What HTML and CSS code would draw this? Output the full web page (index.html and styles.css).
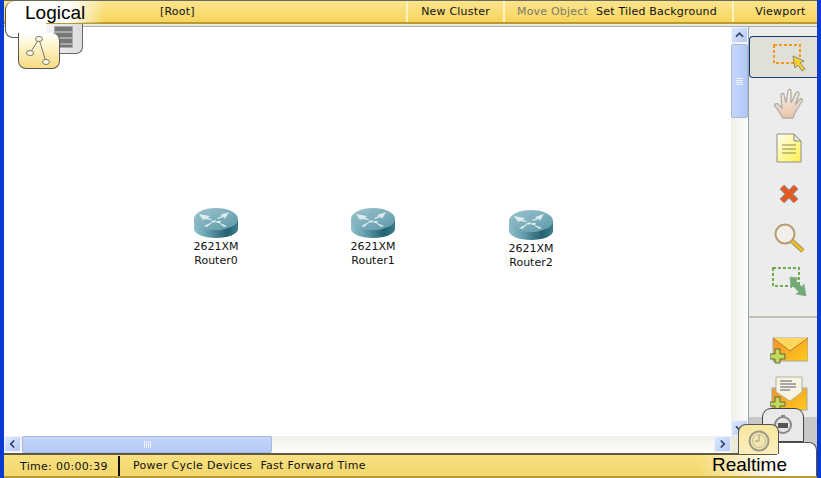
FILE: index.html
```html
<!DOCTYPE html>
<html lang="en">
<head>
<meta charset="utf-8">
<title>Logical workspace</title>
<link rel="stylesheet" href="styles.css">
</head>
<body>
<div class="app">
  <header class="topbar">
    <div class="menu-cell cell-root">[Root]</div>
    <div class="menu-cell cell-cluster">New Cluster</div>
    <div class="menu-cell cell-actions"><span class="disabled">Move Object</span><span>Set Tiled Background</span></div>
    <div class="menu-cell cell-viewport">Viewport</div>
  </header>
  <div class="beige-line"></div>
  <main class="middle">
    <div class="work">
      <div class="work-top">
        <div class="canvas">
          <div class="node node-0"><svg class="router" viewBox="0 0 46 32"><use href="#router-shape"/></svg><span>2621XM</span><span>Router0</span></div>
          <div class="node node-1"><svg class="router" viewBox="0 0 46 32"><use href="#router-shape"/></svg><span>2621XM</span><span>Router1</span></div>
          <div class="node node-2"><svg class="router" viewBox="0 0 46 32"><use href="#router-shape"/></svg><span>2621XM</span><span>Router2</span></div>
        </div>
        <div class="vscroll">
          <div class="sbtn"><svg viewBox="0 0 16 16"><path d="M4 10l4-4 4 4" fill="none" stroke="#2a3f6e" stroke-width="2"/></svg></div>
          <div class="vthumb"><i></i><i></i><i></i><i></i></div>
          <div class="strack"></div>
          <div class="sbtn"><svg viewBox="0 0 16 16"><path d="M4 6l4 4 4-4" fill="none" stroke="#2a3f6e" stroke-width="2"/></svg></div>
        </div>
      </div>
      <div class="hscroll">
        <div class="sbtn"><svg viewBox="0 0 16 16"><path d="M10 4l-4 4 4 4" fill="none" stroke="#2a3f6e" stroke-width="2"/></svg></div>
        <div class="hthumb"><i></i><i></i><i></i><i></i></div>
        <div class="strack"></div>
        <div class="sbtn"><svg viewBox="0 0 16 16"><path d="M6 4l4 4-4 4" fill="none" stroke="#2a3f6e" stroke-width="2"/></svg></div>
        <div class="corner"></div>
      </div>
    </div>
    <aside class="sidebar">
      <div class="tool tool-selected"><svg width="36" height="30" viewBox="0 0 36 30"><rect x="2" y="3" width="26" height="18" fill="none" stroke="#f39a1c" stroke-width="2" stroke-dasharray="3 2"/><path d="M21 14l11 5-4 2 5 6-3 2-4-6-3 3z" fill="#f6d32c" stroke="#8c8a70"/></svg></div>
      <div class="tool tool-hand"><svg width="32" height="32" viewBox="0 0 32 32"><defs><linearGradient id="handg" x1="0" y1="0" x2="0" y2="1"><stop offset="0" stop-color="#faf3ee"/><stop offset="1" stop-color="#e8c4a8"/></linearGradient></defs><path d="M9 30C6 26 4 21 1 18c-1-2 1-3 3-2l4 4L7 7c0-2 3-2 3 0l2 8 2-12c0-2 3-2 3 0l0 12 5-10c1-2 3-1 3 1l-4 11 5-6c1-1 3 0 2 2l-6 10c-2 3-2 5-3 7z" fill="url(#handg)" stroke="#b0b0a8" stroke-width="1.4"/></svg></div>
      <div class="tool tool-note"><svg width="26" height="30" viewBox="0 0 26 30"><defs><linearGradient id="noteg" x1="0" y1="0" x2="1" y2="1"><stop offset="0" stop-color="#fffff0"/><stop offset="1" stop-color="#fff04c"/></linearGradient></defs><path d="M1 1h17l7 7v21H1z" fill="url(#noteg)" stroke="#8c8c8c"/><path d="M18 1v7h7z" fill="#e8e8d8" stroke="#8c8c8c"/><path d="M6 12h14M6 16h14M6 20h14" stroke="#8c8a50"/></svg></div>
      <div class="tool tool-x"><svg width="22" height="22" viewBox="0 0 22 22"><path d="M4 4l14 14M18 4L4 18" stroke="#8b8b8b" stroke-width="6.5"/><path d="M4 4l14 14M18 4L4 18" stroke="#e8581c" stroke-width="4.5"/></svg></div>
      <div class="tool tool-zoom"><svg width="32" height="32" viewBox="0 0 32 32"><circle cx="12" cy="12" r="9.5" fill="#f1efe9" stroke="#b89a6c" stroke-width="2"/><path d="M19 19l11 10" stroke="#8f8a70" stroke-width="4.5"/><path d="M19 19l11 10" stroke="#f6c21c" stroke-width="3"/></svg></div>
      <div class="tool tool-resize"><svg width="36" height="34" viewBox="0 0 36 34"><rect x="2" y="2" width="26" height="18" fill="none" stroke="#6dae54" stroke-width="2" stroke-dasharray="3 2"/><path d="M19 11l8 1-2 3 6 6 2-3 2 12-10-2 3-2-6-6-2 2z" fill="#70ac74" stroke="#8a9a8a" stroke-width=".6"/></svg></div>
      <div class="tool-divider"></div>
      <div class="tool tool-mail"><svg width="38" height="28" viewBox="0 0 38 28"><defs><linearGradient id="mailg" x1="0" y1="0" x2="1" y2="1"><stop offset="0" stop-color="#f4902c"/><stop offset="1" stop-color="#ffcc1c"/></linearGradient></defs><rect x="3" y="1" width="35" height="23" fill="url(#mailg)" stroke="#a8a8a0"/><path d="M3 1l17 13L38 1" fill="#ffd75c" stroke="#b07a2c"/><path d="M5 12h5v5h5v5h-5v4H5v-4H0v-5h5z" fill="#c4d85c" stroke="#5a6a40"/></svg></div>
      <div class="tool tool-mail2"><svg width="38" height="35" viewBox="0 0 38 35"><rect x="2" y="12" width="35" height="22" fill="url(#mailg)" stroke="#a8a8a0"/><path d="M6 16V1h26v15l-12 9z" fill="#f8f4e0" stroke="#b0b0a0"/><path d="M10 5h12M10 8h16M10 11h16M10 14h10" stroke="#a8a8a8" stroke-width="2"/><path d="M5 21h5v5h5v4h-5v3H5v-3H0v-4h5z" fill="#c4d85c" stroke="#5a6a40"/></svg></div>
    </aside>
  </main>
  <footer class="bottombar">
    <div class="time">Time: 00:00:39</div>
    <div class="actions"><span>Power Cycle Devices</span><span>Fast Forward Time</span></div>
  </footer>

  <div class="sub-tile">
    <div class="sub-icon"></div>
  </div>
  <div class="logical-tab">Logical</div>
  <div class="logical-tile"><svg width="42" height="35" viewBox="0 0 42 35"><path d="M20 6L11 20M20 6l7 23" stroke="#77776c" fill="none"/><ellipse cx="20" cy="6" rx="3.500" ry="2.500" fill="#fffbe6" stroke="#77776c"/><ellipse cx="11" cy="20" rx="3.500" ry="2.500" fill="#fffbe6" stroke="#77776c"/><ellipse cx="27" cy="29" rx="3.500" ry="2.500" fill="#fffbe6" stroke="#77776c"/></svg></div>

  <div class="clock-tile"><svg width="22" height="22" viewBox="0 0 22 22"><circle cx="11" cy="11" r="8" fill="#e4e4e4" stroke="#8a8a8a" stroke-width="2"/><rect x="6" y="9" width="10" height="5" fill="#555"/><rect x="9" y="1" width="4" height="2" fill="#888"/></svg></div>
  <div class="realtime-tab">
    <div class="realtime-body"></div>
    <div class="realtime-icon"><svg width="22" height="22" viewBox="0 0 22 22"><circle cx="11" cy="11" r="9.500" fill="#f3e7ae" stroke="#9d9a84" stroke-width="2"/><circle cx="11" cy="11" r="6.500" fill="none" stroke="#c2bd9c"/><path d="M11 5v6H7" fill="none" stroke="#9d9a84"/></svg></div>
    <div class="realtime-label">Realtime</div>
  </div>
</div>

<svg class="defs" width="0" height="0">
  <defs>
    <linearGradient id="rside" x1="0" x2="1" y1="0" y2="0">
      <stop offset="0" stop-color="#8fc0cc"/><stop offset=".35" stop-color="#5f9aaa"/><stop offset=".75" stop-color="#24606f"/><stop offset="1" stop-color="#3e7f8f"/>
    </linearGradient>
    <linearGradient id="rtop" x1="0" x2="1" y1="0" y2="1">
      <stop offset="0" stop-color="#9cc4ce"/><stop offset="1" stop-color="#5d98a8"/>
    </linearGradient>
    <g id="router-shape">
      <path d="M1 12v10c0 5 10 9 22 9s22-4 22-9V12z" fill="url(#rside)"/>
      <ellipse cx="23" cy="12" rx="22" ry="11" fill="url(#rtop)"/>
      <path d="M6 7l11 2-2 2 4 1-1 1-6-1-2 1zM36 5l-9 3 2 1-5 2 1 1 6-2 1 2zM11 19l8-4-1-1 5-1-1 3-2-1-6 5zM34 19l-7-3 1-2-5 0 1 2 2 0 5 4z" fill="#dbeaee"/>
    </g>
  </defs>
</svg>
</body>
</html>
```

FILE: styles.css
```css
* { box-sizing: border-box; }
html, body { margin: 0; padding: 0; width: 821px; height: 478px; overflow: hidden; }
body { font-family: "DejaVu Sans", Verdana, sans-serif; font-size: 11px; color: #111; background: #0a3bd0; }
.defs { position: absolute; }
.app { position: relative; width: 821px; height: 478px; padding: 0 4px; background: linear-gradient(to right, #0a3bd0 0, #0a3bd0 4px, #fff 4px, #fff 817px, #0a3bd0 817px); display: flex; flex-direction: column; overflow: hidden; }

.topbar { height: 24px; flex: none; display: flex; background: linear-gradient(to bottom, #fbe48f, #f8d867 80%, #f5d45c); border-top: 1px solid #6b6a55; border-bottom: 2px solid #b79a32; line-height: 21px; padding-left: 76px; letter-spacing: .2px; }
.menu-cell { height: 100%; text-align: center; white-space: nowrap; }
.cell-root { width: 328px; border-right: 2px solid #fbf2c4; text-align: left; padding-left: 80px; }
.cell-cluster { width: 97px; border-right: 2px solid #fbf2c4; }
.cell-actions { width: 229px; display: flex; gap: 8px; padding-left: 12px; border-right: 2px solid #fbf2c4; }
.cell-viewport { flex: 1; padding-left: 10px; }
.disabled { color: #7d7a6a; }

.beige-line { height: 3px; flex: none; background: #eeeadc; border-bottom: 1px solid #9cb0b6; }

.middle { flex: 1; min-height: 0; display: flex; }
.work { width: 744px; flex: none; display: flex; flex-direction: column; }
.work-top { flex: 1; min-height: 0; display: flex; }
.canvas { position: relative; width: 727px; flex: none; background: #fff; }

.node { position: absolute; width: 60px; display: flex; flex-direction: column; align-items: center; line-height: 14px; font-size: 11px; }
.node-0 { left: 182px; top: 180px; }
.node-1 { left: 339px; top: 180px; }
.node-2 { left: 497px; top: 182px; }
.router { width: 46px; height: 32px; display: block; margin-bottom: 1px; }

.vscroll { width: 17px; flex: none; display: flex; flex-direction: column; background: linear-gradient(to right, #f2f0e8, #fdfdfb); }
.sbtn { width: 17px; height: 16px; flex: none; background: linear-gradient(135deg, #dfe8fd, #b5c8f6); border: 1px solid #eef2fc; border-radius: 2px; }
.sbtn svg { display: block; width: 15px; height: 14px; }
.vthumb { height: 74px; margin-top: 1px; flex: none; background: linear-gradient(to right, #c6d6fb, #b3c8f8); border: 1px solid #e6ecfb; border-radius: 2px; outline: 1px solid #a6b7d8; outline-offset: -1px; display: flex; flex-direction: column; justify-content: center; align-items: center; gap: 1px; }
.vthumb i { display: block; width: 7px; height: 1px; background: #eef3ff; }
.strack { flex: 1; min-width: 0; min-height: 0; }

.hscroll { height: 17px; flex: none; display: flex; background: linear-gradient(to bottom, #f2f0e8, #fdfdfb); }
.hthumb { width: 250px; margin-left: 1px; flex: none; background: linear-gradient(to bottom, #c6d6fb, #b3c8f8); border: 1px solid #e6ecfb; border-radius: 2px; outline: 1px solid #a6b7d8; outline-offset: -1px; display: flex; justify-content: center; align-items: center; gap: 1px; }
.hthumb i { display: block; width: 1px; height: 7px; background: #eef3ff; }
.corner { width: 17px; flex: none; background: #ece9d8; }

.sidebar { flex: 1; background: linear-gradient(to bottom, #ececec 0, #ececec 390px, #c8c8c8 390px); border-left: 1px solid #93a6a8; display: flex; flex-direction: column; align-items: center; position: relative; }
.tool { width: 100%; flex: none; display: flex; justify-content: center; align-items: center; padding-left: 12px; }
.tool-selected { height: 42px; margin-top: 9px; background: #e1e0d8; border: 1px solid #123f74; border-right: none; border-radius: 4px 0 0 4px; }
.tool-hand { height: 46px; margin-top: 3px; padding-left: 14px; }
.tool-note { height: 42px; }
.tool-x { height: 50px; }
.tool-zoom { height: 38px; }
.tool-resize { height: 52px; }
.tool-divider { width: 100%; height: 2px; margin-top: 7px; background: #c3c0b4; flex: none; }
.tool-mail { height: 28px; margin-top: 19px; }
.tool-mail2 { height: 35px; margin-top: 11px; }

.bottombar { height: 25px; flex: none; display: flex; align-items: center; margin: 0 0 0 0; background: linear-gradient(to bottom, rgba(255,255,255,.12), rgba(0,0,0,.02)), linear-gradient(to right, #f8dc70 0, #f8dc70 696px, #fff 770px); border-top: 2px solid #5f5b42; border-bottom: 2px solid #b79a32; letter-spacing: .3px; }
.time { width: 116px; padding-left: 16px; height: 20px; line-height: 21px; border-right: 2px solid #111; white-space: nowrap; }
.actions { padding-left: 13px; display: flex; gap: 8px; white-space: nowrap; line-height: 21px; }

.logical-tab { position: absolute; left: 5px; top: 1px; width: 100px; height: 22px; padding-left: 19px; background: linear-gradient(to right, #fff 0, #fff 62%, rgba(255,255,255,0) 100%); border-left: 1px solid #555; border-top-left-radius: 9px; font-family: "Liberation Sans", Arial, sans-serif; font-size: 19px; line-height: 24px; color: #000; white-space: nowrap; }
.logical-tab::after { content: ""; position: absolute; left: -1px; top: 21px; width: 40px; height: 15px; background: #fff; border-left: 1px solid #555; border-bottom: 1px solid #555; border-bottom-left-radius: 8px; }
.sub-tile { position: absolute; left: 45px; top: 24px; width: 38px; height: 30px; background: linear-gradient(to right, #f6f6f6, #dcdcdc); border: 1px solid #666; border-top: none; border-left: none; border-bottom-right-radius: 7px; display: flex; padding-left: 9px; }
.sub-icon { width: 19px; height: 22px; margin-top: 2px; background: repeating-linear-gradient(to bottom, #777 0, #777 4px, #aaa 4px, #aaa 6px); border: 1px solid #aaa; }
.logical-tile { position: absolute; left: 18px; top: 33px; width: 42px; height: 36px; background: linear-gradient(to bottom, #fff 0, #fff8dc 25%, #f8dc80 100%); border: 1px solid #555; border-top: none; border-radius: 0 8px 8px 8px; }

.clock-tile { position: absolute; left: 762px; top: 408px; width: 42px; height: 34px; background: #e9e9e9; border: 1px solid #444; border-radius: 9px 9px 0 0; display: flex; justify-content: center; padding-top: 5px; }
.realtime-tab { position: absolute; left: 738px; top: 424px; width: 79px; height: 52px; }
.realtime-body { position: absolute; left: 39px; top: 18px; width: 40px; height: 34px; background: #fff; border: 1px solid #555; border-left: none; border-bottom: none; border-radius: 0 8px 0 0; }
.realtime-icon { position: absolute; left: 0; top: 0; width: 41px; height: 30px; background: linear-gradient(to bottom, #f9e7a0, #fbeebc); border: 1px solid #555; border-bottom: none; border-radius: 8px 8px 0 0; display: flex; justify-content: center; align-items: center; padding-top: 2px; }
.realtime-label { position: absolute; left: -26px; top: 30px; width: 105px; height: 22px; font-family: "Liberation Sans", Arial, sans-serif; font-size: 19px; line-height: 22px; color: #000; white-space: nowrap; }
```
